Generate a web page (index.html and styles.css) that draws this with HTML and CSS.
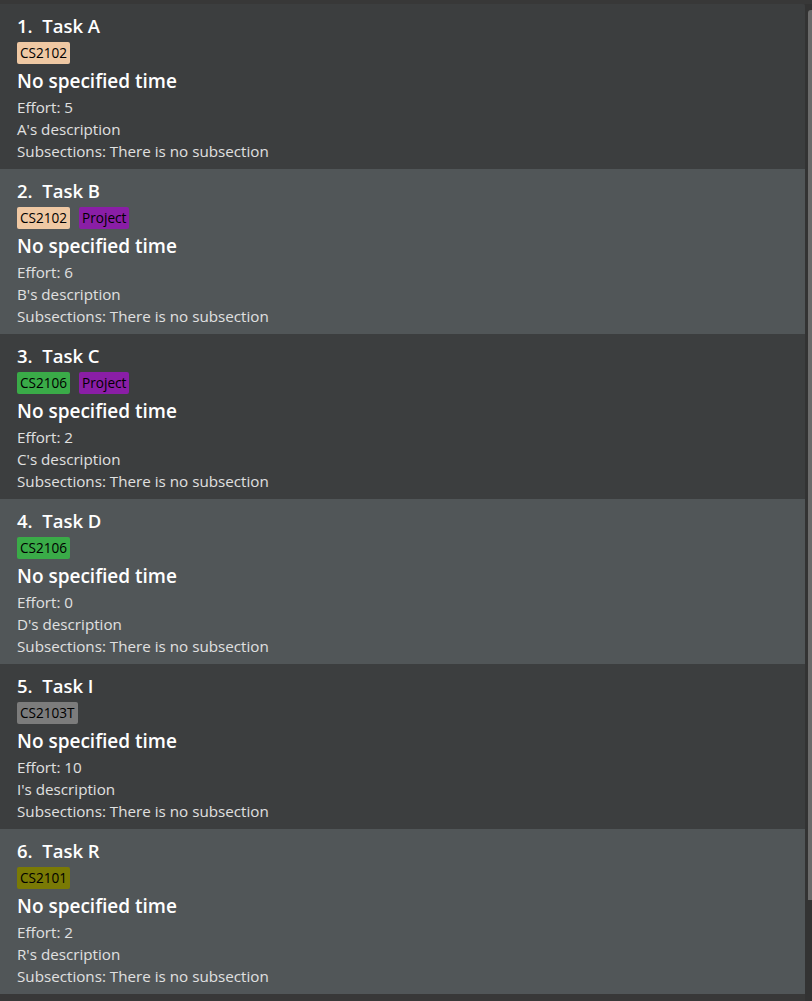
FILE: index.html
```html
<!DOCTYPE html>
<html>
<head>
<meta charset="utf-8">
<link rel="stylesheet" href="styles.css">
</head>
<body>
<div class="frame">
  <div class="list">
    <div class="cell even">
      <div class="title">1.&nbsp; Task A</div>
      <div class="tags"><span class="tag t-cs2102">CS2102</span></div>
      <div class="time">No specified time</div>
      <div class="small">Effort: 5</div>
      <div class="small">A's description</div>
      <div class="small">Subsections: There is no subsection</div>
    </div>
    <div class="cell odd">
      <div class="title">2.&nbsp; Task B</div>
      <div class="tags"><span class="tag t-cs2102">CS2102</span><span class="tag t-project">Project</span></div>
      <div class="time">No specified time</div>
      <div class="small">Effort: 6</div>
      <div class="small">B's description</div>
      <div class="small">Subsections: There is no subsection</div>
    </div>
    <div class="cell even">
      <div class="title">3.&nbsp; Task C</div>
      <div class="tags"><span class="tag t-cs2106">CS2106</span><span class="tag t-project">Project</span></div>
      <div class="time">No specified time</div>
      <div class="small">Effort: 2</div>
      <div class="small">C's description</div>
      <div class="small">Subsections: There is no subsection</div>
    </div>
    <div class="cell odd">
      <div class="title">4.&nbsp; Task D</div>
      <div class="tags"><span class="tag t-cs2106">CS2106</span></div>
      <div class="time">No specified time</div>
      <div class="small">Effort: 0</div>
      <div class="small">D's description</div>
      <div class="small">Subsections: There is no subsection</div>
    </div>
    <div class="cell even">
      <div class="title">5.&nbsp; Task I</div>
      <div class="tags"><span class="tag t-cs2103t">CS2103T</span></div>
      <div class="time">No specified time</div>
      <div class="small">Effort: 10</div>
      <div class="small">I's description</div>
      <div class="small">Subsections: There is no subsection</div>
    </div>
    <div class="cell odd">
      <div class="title">6.&nbsp; Task R</div>
      <div class="tags"><span class="tag t-cs2101">CS2101</span></div>
      <div class="time">No specified time</div>
      <div class="small">Effort: 2</div>
      <div class="small">R's description</div>
      <div class="small">Subsections: There is no subsection</div>
    </div>
  </div>
  <div class="scrollbar"><div class="thumb"></div></div>
</div>
</body>
</html>
```
FILE: styles.css
```css
html, body {
  margin: 0;
  padding: 0;
  background: #383838;
  font-family: "Open Sans", "Noto Sans", sans-serif;
}
.frame {
  display: flex;
  height: 1001px;
  padding-top: 4px;
  box-sizing: border-box;
}
.list {
  width: 805px;
  height: 990px;
  background: #3c3e3f;
  border-top-right-radius: 3px;
  overflow: hidden;
}
.cell {
  height: 165px;
  box-sizing: border-box;
  padding: 11px 17px 0 17px;
}
.even { background: #3c3e3f; }
.odd { background: #515658; }
.title {
  color: #ffffff;
  font-size: 18.5px;
  font-weight: 600;
  line-height: 22px;
  height: 22px;
}
.tags {
  display: flex;
  gap: 9px;
  margin-top: 5px;
  height: 22px;
}
.tag {
  display: inline-block;
  height: 22px;
  line-height: 22px;
  padding: 0 3px;
  border-radius: 2px;
  font-size: 13.6px;
  color: #000000;
  box-sizing: border-box;
}
.t-cs2102 { background: #efc8a3; }
.t-project { background: #8a1ea6; }
.t-cs2106 { background: #3aab48; }
.t-cs2103t { background: #7c7c7c; }
.t-cs2101 { background: #7a7a05; }
.time {
  color: #ffffff;
  font-size: 19px;
  font-weight: 600;
  line-height: 30px;
  margin-top: 2px;
}
.small {
  color: #e0e0e0;
  font-size: 15.2px;
  line-height: 22px;
}
.scrollbar {
  width: 7px;
  height: 997px;
  background: #333333;
  padding-left: 3px;
  box-sizing: border-box;
}
.thumb {
  margin-top: 6px;
  width: 4px;
  height: 890px;
  background: #6b6b6b;
  border-top-left-radius: 3px;
}
```
